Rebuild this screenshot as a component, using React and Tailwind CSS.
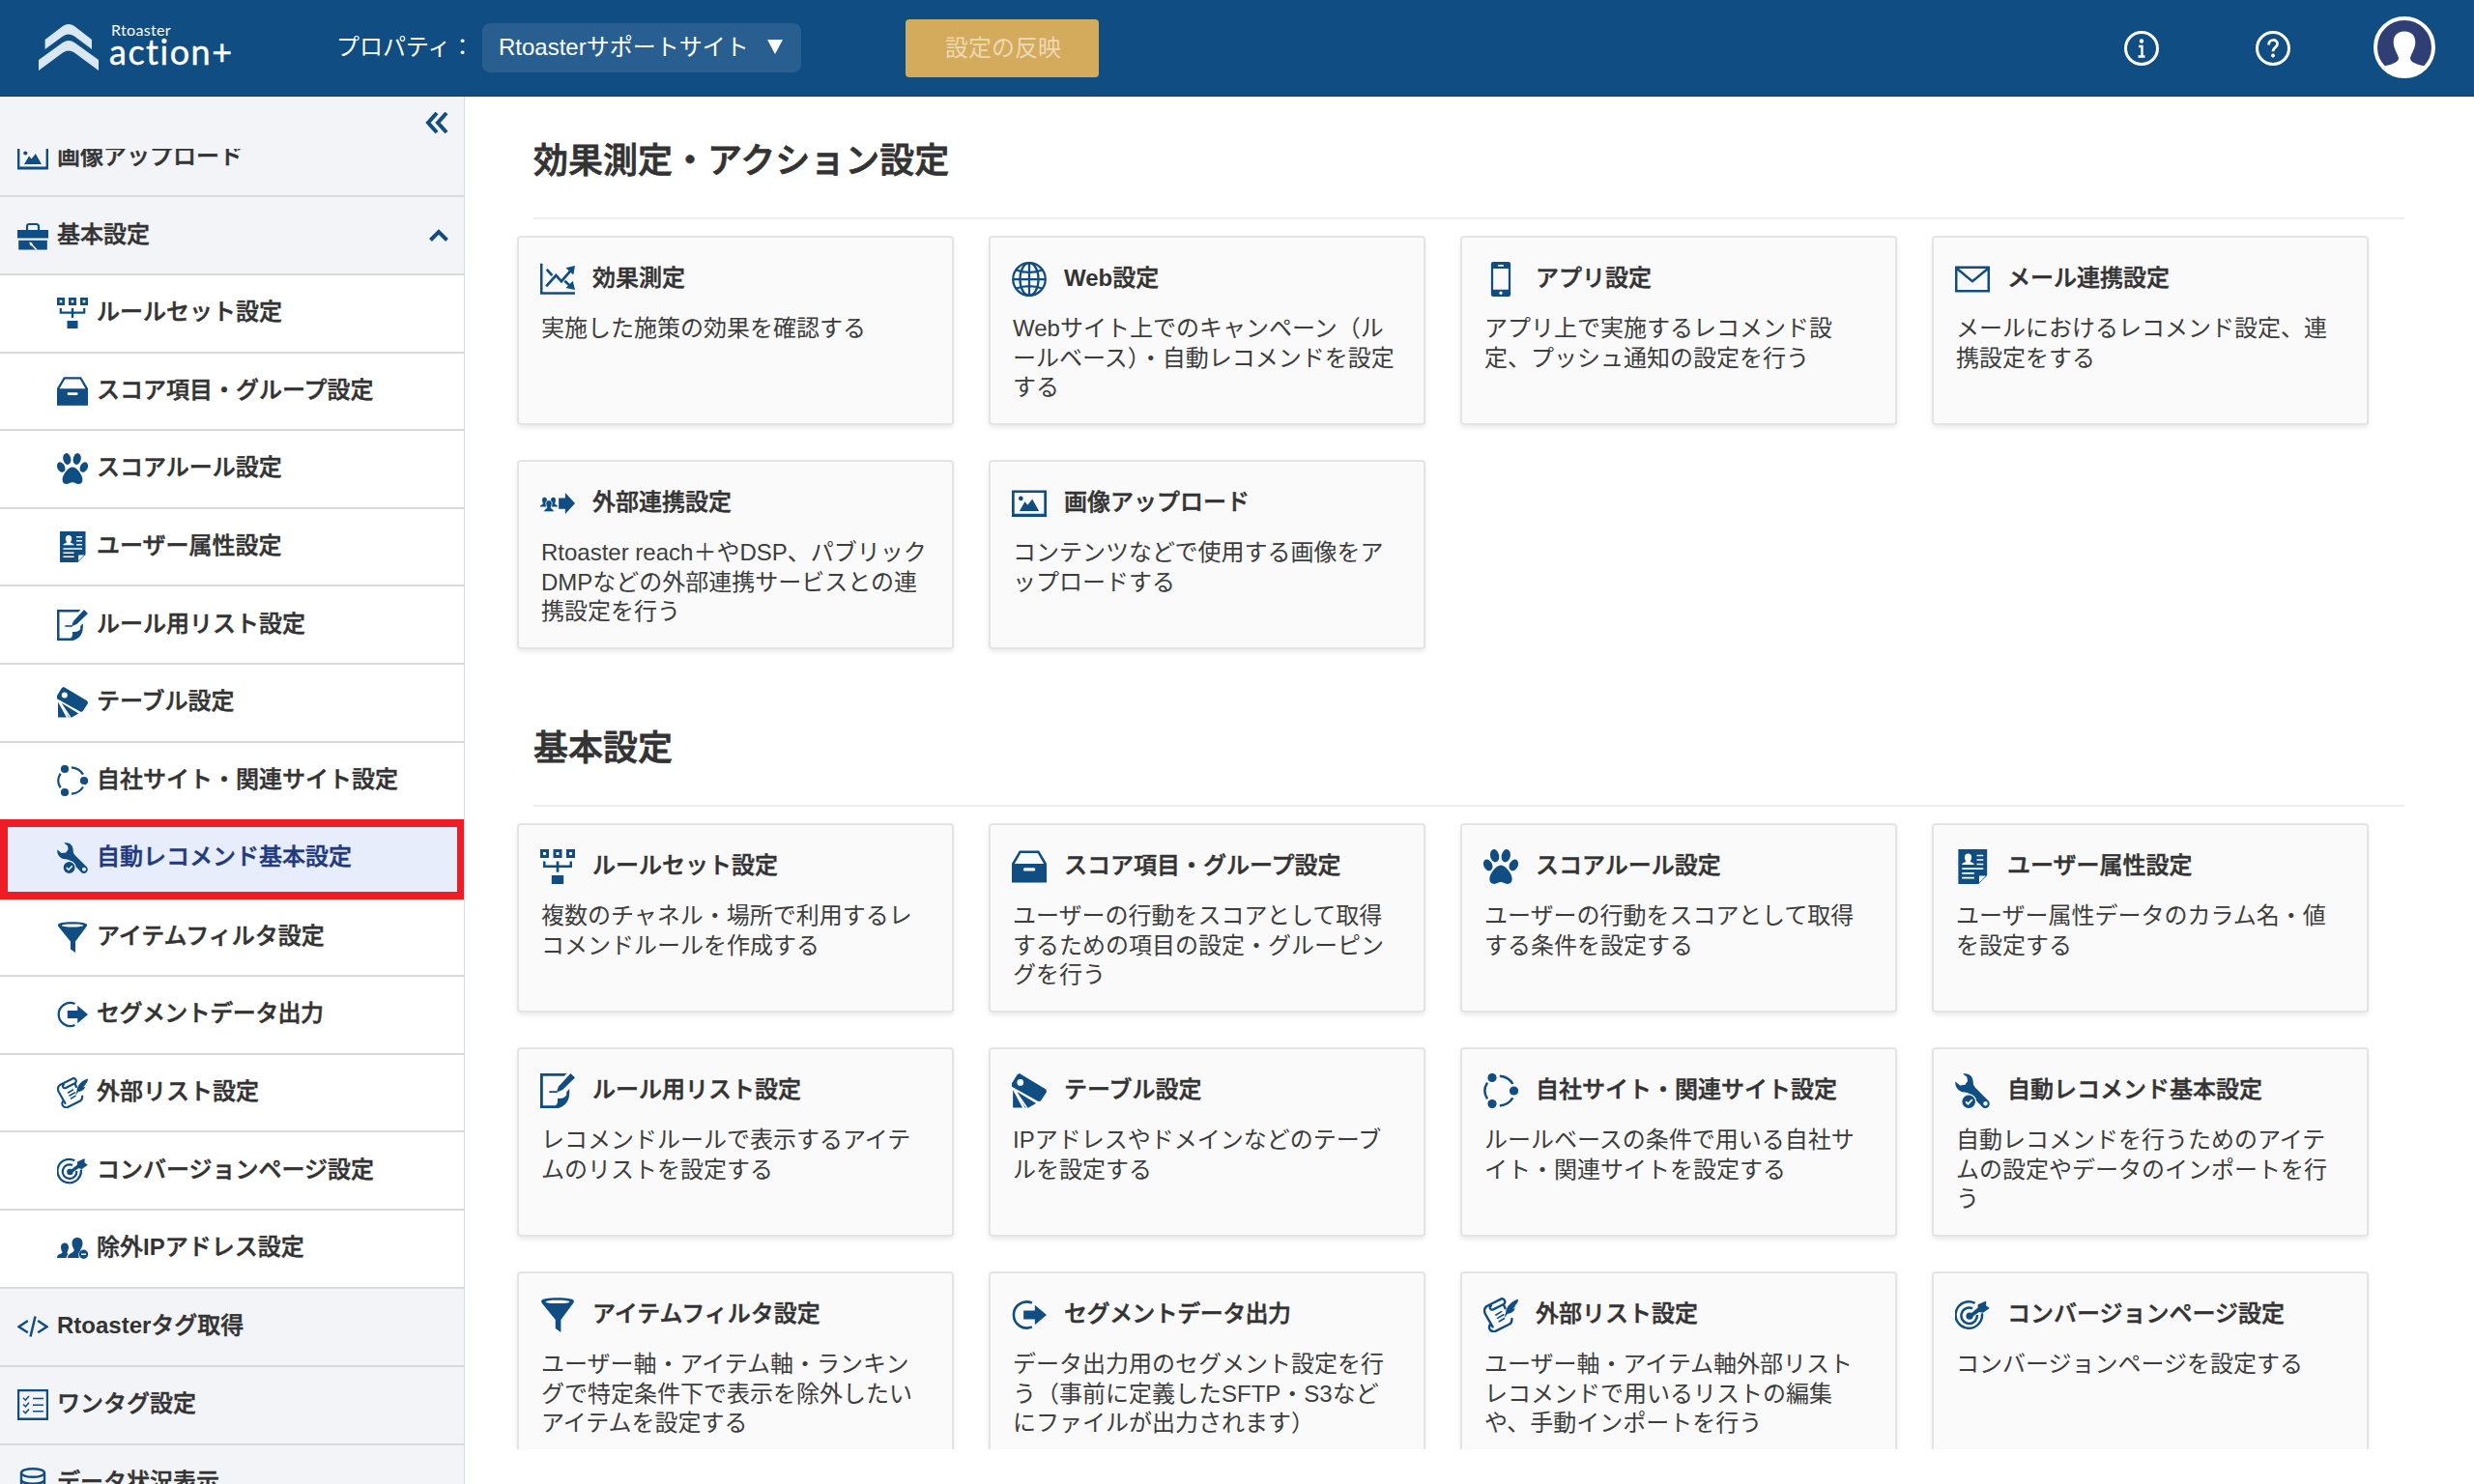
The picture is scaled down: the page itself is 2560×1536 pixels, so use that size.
import React from "react";

const BLUE = "#104d82";

/* ---------- icons, all drawn on a 32 unit grid ---------- */

const Svg = ({ className = "size-8", children }) => (
  <svg viewBox="0 0 32 32" className={"shrink-0 " + className} fill={BLUE} stroke="none">
    {children}
  </svg>
);

const ImageIcon = (p) => (
  <Svg {...p}>
    <path fillRule="evenodd" d="M0 4h32v24.5H0zM2.4 6.2v19.4h27.2V6.2z" />
    <circle cx="8.3" cy="11.5" r="2.1" />
    <path d="M7 23l5-8.5 2.6 3L18.8 12 25 23z" />
  </Svg>
);

const BriefcaseIcon = (p) => (
  <Svg {...p}>
    <path d="M10 10V6.500q0-2.500 2.500-2.500h7q2.500 0 2.500 2.500V10" fill="none" stroke={BLUE} strokeWidth="2.200" />
    <path d="M0 10h32v8.500H0zM1.200 20.800h29.600v9.700H1.200z" />
    <path d="M12.500 22.500q3 0 3.500 3l5 5h-2.500l-3.500-4q-3-.5-2.500-4z" fill="#f3f4f8" />
  </Svg>
);

const RuleSetIcon = (p) => (
  <Svg {...p}>
    <path
      fillRule="evenodd"
      d="M0 0h8v8H0zM2.700 2.700v2.600h2.600V2.700zM12 0h8v8h-8zM14.700 2.700v2.600h2.600V2.700zM24 0h8v8h-8zM26.700 2.700v2.600h2.600V2.700z"
    />
    <path d="M2.700 11h2.200v3.600h9.900V11h2.400v3.600h9.900V11h2.200v5.800H17.200V21h-2.400v-4.200H2.700zM10.500 24h11v8h-11z" />
  </Svg>
);

const DrawerIcon = (p) => (
  <Svg {...p}>
    <path
      fillRule="evenodd"
      d="M7 1.300h18L32 13v17.700H0V13zM8.200 3.500L2.600 13.300h26.800L23.800 3.500zM11.800 17.200q-1.200 0-1.200 1.400t1.200 1.400h8.600q1.200 0 1.200-1.400t-1.200-1.400z"
    />
  </Svg>
);

const PawIcon = (p) => (
  <Svg {...p}>
    <ellipse cx="10.300" cy="6" rx="4" ry="6" transform="rotate(-12 10.300 6)" />
    <ellipse cx="20.700" cy="6" rx="4" ry="6" transform="rotate(12 20.700 6)" />
    <ellipse cx="4.200" cy="14.600" rx="3.900" ry="5.500" transform="rotate(-25 4.200 14.600)" />
    <ellipse cx="27.800" cy="14.600" rx="3.900" ry="5.500" transform="rotate(25 27.800 14.600)" />
    <path d="M16 14.600c4.500 0 10.400 8 10.400 12.800 0 3-1.600 4.600-4.400 4.600-2.400 0-3.600-1.700-6-1.700S12.400 32 10 32c-2.800 0-4.400-1.600-4.400-4.600 0-4.800 5.900-12.800 10.400-12.800z" />
  </Svg>
);

const ProfileIcon = (p) => (
  <Svg {...p}>
    <path fillRule="evenodd" d="M3 0h26.500v24l-8 8H3zM28.200 24.500h-6V30.600z" />
    <g fill="#fff">
      <path d="M12 4c2 0 3.200 1.400 3.200 3.500 0 1.800-.8 2.600-1.200 3.700 0 1.100 3.600 1 3.600 3H6.400c0-2 3.600-1.900 3.600-3C9.600 10.100 8.800 9.300 8.800 7.500 8.800 5.400 10 4 12 4zM20 5h6v1.500h-6zM20 9h6v1.500h-6zM20 13h6v1.500h-6zM6.400 17.200H26v1.500H6.400zM6.400 21.400h11.200v1.500H6.400zM6.400 25.500h11.200V27H6.400z" />
    </g>
  </Svg>
);

const EditListIcon = (p) => (
  <Svg {...p}>
    <path d="M0 0h24.500L22 2.500H2.500v27H14c1.800-1.200 2.200-3 2-6.500 4.500.4 7-.8 8.200-3.200V17l2.600-2.800c.8 10.800-3 15.400-10.300 17.800H0z" />
    <path d="M28 0l4 4-11.500 11-4 1.800-1.200-.6 1.600-4.200z" />
    <path d="M8.300 16.200h7.500v1.600H8.300z" />
  </Svg>
);

const TagsIcon = (p) => (
  <Svg {...p}>
    <path
      fillRule="evenodd"
      d="M7 0L31.400 14.600 32 17l-5.600 8.600-2 .2L0 12.200V9L5 1zM7.800 5.400a3 3 0 100 6 3 3 0 000-6z"
    />
    <path d="M1 15.400L9.800 31.500H1zM4.800 16.800L22.300 27.600 14.800 31.700h-2.600z" />
    <path d="M2.500 15L14 32" stroke="#fff" strokeWidth="1.400" />
  </Svg>
);

const SitesIcon = (p) => (
  <Svg {...p}>
    <circle cx="8" cy="4" r="4.100" />
    <circle cx="28" cy="16" r="4.100" />
    <circle cx="8" cy="28" r="4.100" />
    <g fill="none" stroke={BLUE} strokeWidth="2.200">
      <path d="M15 2.400q8 .6 12 7.200M27 22.500q-4 6.500-12 7.200M3.600 8.600q-4.800 7.400 0 14.800" />
    </g>
  </Svg>
);

const WrenchIcon = (p) => (
  <Svg {...p}>
    <path
      fillRule="evenodd"
      d="M7.200.4C13-1 17 3.200 16.600 8.200q0 2.800 2 5L31 25.500c2.400 3.500-1.200 8-5.300 6L13.500 18.800q-2-1.600-5-1.500C3 17-.4 12 .3 7.500L4.600 11l4.600-.6 2.400-3.400-.6-3.600zM28 25.800a2 2 0 100 4 2 2 0 000-4z"
    />
    <circle cx="12.600" cy="26" r="6.600" stroke="#f3f5fb" strokeWidth="1.200" />
    <path d="M9.800 26l2.200 2.200 3.800-4" fill="none" stroke="#fff" strokeWidth="1.600" />
  </Svg>
);

const FunnelIcon = (p) => (
  <Svg {...p}>
    <path
      fillRule="evenodd"
      d="M16 .3c9 0 15 1.100 15 3 0 1.400-.6 2-1.400 3L19 20.500V32l-5-3.500v-8L2.400 6.300C1.600 5.300 1 4.700 1 3.300c0-1.900 6-3 15-3zm0 2.200C9.500 2.500 5 3 5 3.900s4.500 1.500 11 1.500 11-.6 11-1.500-4.500-1.400-11-1.400z"
    />
  </Svg>
);

const ExportIcon = (p) => (
  <Svg {...p}>
    <path d="M18.500 5A12 12 0 1018.500 27" fill="none" stroke={BLUE} strokeWidth="2.300" />
    <path d="M10.800 12h10.400V6.800L32 16 21.200 25.200V20H10.800z" />
  </Svg>
);

const ScrollIcon = (p) => (
  <Svg {...p}>
    <g fill="none" stroke={BLUE} strokeWidth="2.100" strokeLinejoin="round" strokeLinecap="round">
      <path d="M16.500 1.200L3 8C0 10.500.5 13.500 2.500 16.500L8.500 27M16.500 1.200c3-.6 4.500 3.400 2 5L9 11c-2.500 1-4-2-2-3.500M6 25c-2 4 1 7 5 6l13-6.500c2-1 2.200-2.500 2.200-5M18.500 6.500l1.500 3.500" />
      <path d="M11.500 16l5-3M13 19l5.500-3.200M14.500 22l4.500-2.600" strokeWidth="1.500" />
    </g>
    <path d="M32 1.500C26 3 21 8 20.500 14l-1.500 5 3-4c5-.5 7-4 7-5l-2 .2 3-2.600-1.600.2C31 6 32 4 32 1.500z" />
  </Svg>
);

const TargetIcon = (p) => (
  <Svg {...p}>
    <g fill="none" stroke={BLUE} strokeWidth="2.200">
      <path d="M18.300 5.200A12.200 12.200 0 1024.800 14.500" />
      <path d="M16 10A7.300 7.300 0 1020.300 16" />
    </g>
    <circle cx="13.400" cy="17" r="3.200" />
    <path d="M13 16l8-6.600V6.500L28.600 3v4.500l3.200 2.200-6 4.300-3.500-.7-7.300 5z" />
  </Svg>
);

const UsersMinusIcon = (p) => (
  <Svg {...p}>
    <path d="M8 10.500c2.500 0 4 1.800 4 4.600 0 2.400-1 3.700-1.500 5 0 1.400.8 1.800.8 2.400-1 .8-1.600 1.800-1.600 3.500H0c0-5 5.500-3.500 5.500-6-.5-1.300-1.500-2.600-1.500-5 0-2.800 1.500-4.500 4-4.500z" />
    <path d="M21 5c3.500 0 5.500 2.300 5.500 6 0 3-1.300 4.500-2.200 6.500v1.200c-2.300 1.400-2.600 4.300-1.400 7.300H11c0-5.500 6.700-4.300 6.700-8.500-.8-2-2.200-3.500-2.200-6.500 0-3.700 2-6 5.500-6z" />
    <path fillRule="evenodd" d="M27.500 17.500a4.700 4.700 0 100 9.400 4.700 4.700 0 000-9.400zM25 21.400h5v1.700h-5z" />
  </Svg>
);

const CodeIcon = (p) => (
  <Svg {...p}>
    <path d="M10.800 10L1.500 16.300l9.300 6M21.200 10l9.300 6.300-9.300 6M18.500 5.500L13.500 26.500" fill="none" stroke={BLUE} strokeWidth="2.500" />
  </Svg>
);

const ChecklistIcon = (p) => (
  <Svg {...p}>
    <path fillRule="evenodd" d="M0 0h32v32H0zM2.200 2.200v27.400h27.600V2.200z" />
    <path
      d="M6 8.800l2.400 2.400L12 7M6 15.500l2.400 2.400L12 13.700M6 22.200l2.400 2.400L12 20.400M16 9.600h11M16 16.300h11M16 22.800h11"
      fill="none"
      stroke={BLUE}
      strokeWidth="1.500"
    />
  </Svg>
);

const DatabaseIcon = (p) => (
  <Svg {...p}>
    <g fill="none" stroke={BLUE} strokeWidth="2.400">
      <ellipse cx="16" cy="5.500" rx="12" ry="4.300" />
      <path d="M4 5.500v21c0 5.700 24 5.700 24 0v-21M4 12.500c0 5.700 24 5.700 24 0M4 19.500c0 5.700 24 5.700 24 0" />
    </g>
  </Svg>
);

const ChartIcon = (p) => (
  <Svg {...p}>
    <path d="M0 1.500h2.200v26.300H32V30H0z" />
    <g fill="none" stroke={BLUE} strokeWidth="2.400">
      <path d="M5.500 22.500l9-10 5 5.500L29 7" />
      <path d="M6 7l5 5.500M22.500 17.500l6 5.500" />
    </g>
    <path d="M32 3.600l-1.500 8.500-7-6.500zM32 25.700l-8.500-1.700 6.500-6.500z" />
  </Svg>
);

const GlobeIcon = (p) => (
  <Svg {...p}>
    <g fill="none" stroke={BLUE} strokeWidth="2">
      <circle cx="16" cy="16" r="14.900" />
      <ellipse cx="16" cy="16" rx="8.500" ry="14.900" />
      <path d="M16 1v30M1 16h30M4 7.500q12 4.500 24 0M4 24.500q12-4.500 24 0" />
    </g>
  </Svg>
);

const PhoneIcon = (p) => (
  <Svg {...p}>
    <path
      fillRule="evenodd"
      d="M9 0h14q2 0 2 2v28q0 2-2 2H9q-2 0-2-2V2q0-2 2-2zM9 6.300v19.200h14V6.300zM13.500 2.700v1.500h5V2.700zM16 27.200a1.500 1.500 0 100 3 1.500 1.500 0 000-3z"
    />
  </Svg>
);

const MailIcon = (p) => (
  <Svg {...p}>
    <path d="M1.100 5.100h29.800v21.800H1.100zM1.500 6l14.500 12L30.500 6" fill="none" stroke={BLUE} strokeWidth="2.200" />
  </Svg>
);

const LinkOutIcon = (p) => (
  <Svg {...p}>
    <path d="M17 11h6V6.300l9 9.700-9 9.700V21h-6z" />
    <path d="M4 10.500c1.500 0 2.200 1 2.200 2.500S5.500 15.500 5.500 16.500L6 19H0c0-2 2.500-1.500 2.500-3 0-.8-.7-1.500-.7-3S2.500 10.500 4 10.500zM12 10.500c1.500 0 2.200 1 2.200 2.500s-.7 2.200-.7 3c0 1.500 2.500 1 2.500 3h-6l.5-2.500c0-1-.7-2-.7-3.500s.7-2.500 2.200-2.500z" />
    <path d="M8 13c2 0 2.800 1.500 2.800 3.200S10 19 10 20s2.800 1.300 2.800 3.800H3.200C3.200 21.300 6 21 6 20s-.8-2.100-.8-3.800S6 13 8 13z" stroke="#fafafa" strokeWidth=".7" />
  </Svg>
);

/* ---------- text ---------- */

/* Latin runs are bold; Japanese runs are medium with a light outline. */
const Heading = ({ children }) =>
  children.split(/([A-Za-z]+)/).map((part, i) =>
    i % 2 ? (
      <span key={i} className="font-bold">
        {part}
      </span>
    ) : (
      <span key={i} className={"[-webkit-text-stroke:0.5px_currentColor] " + (part.includes("セグメント") ? "tracking-[-0.550px]" : "")}>
        {part}
      </span>
    )
  );

/* ---------- data ---------- */

const subItems = [
  [RuleSetIcon, "ルールセット設定"],
  [DrawerIcon, "スコア項目・グループ設定"],
  [PawIcon, "スコアルール設定"],
  [ProfileIcon, "ユーザー属性設定"],
  [EditListIcon, "ルール用リスト設定"],
  [TagsIcon, "テーブル設定"],
  [SitesIcon, "自社サイト・関連サイト設定"],
  [WrenchIcon, "自動レコメンド基本設定", true],
  [FunnelIcon, "アイテムフィルタ設定"],
  [ExportIcon, "セグメントデータ出力"],
  [ScrollIcon, "外部リスト設定"],
  [TargetIcon, "コンバージョンページ設定"],
  [UsersMinusIcon, "除外IPアドレス設定"],
];

const tailItems = [
  [CodeIcon, "Rtoasterタグ取得"],
  [ChecklistIcon, "ワンタグ設定"],
  [DatabaseIcon, "データ状況表示"],
];

const sections = [
  {
    title: "効果測定・アクション設定",
    cards: [
      [ChartIcon, "効果測定", ["実施した施策の効果を確認する"]],
      [GlobeIcon, "Web設定", ["Webサイト上でのキャンペーン（ル", "ールベース）・自動レコメンドを設定", "する"]],
      [PhoneIcon, "アプリ設定", ["アプリ上で実施するレコメンド設", "定、プッシュ通知の設定を行う"]],
      [MailIcon, "メール連携設定", ["メールにおけるレコメンド設定、連", "携設定をする"]],
      [LinkOutIcon, "外部連携設定", ["Rtoaster reach＋やDSP、パブリック", "DMPなどの外部連携サービスとの連", "携設定を行う"]],
      [ImageIcon, "画像アップロード", ["コンテンツなどで使用する画像をア", "ップロードする"]],
    ],
  },
  {
    title: "基本設定",
    cards: [
      [RuleSetIcon, "ルールセット設定", ["複数のチャネル・場所で利用するレ", "コメンドルールを作成する"]],
      [DrawerIcon, "スコア項目・グループ設定", ["ユーザーの行動をスコアとして取得", "するための項目の設定・グルーピン", "グを行う"]],
      [PawIcon, "スコアルール設定", ["ユーザーの行動をスコアとして取得", "する条件を設定する"]],
      [ProfileIcon, "ユーザー属性設定", ["ユーザー属性データのカラム名・値", "を設定する"]],
      [EditListIcon, "ルール用リスト設定", ["レコメンドルールで表示するアイテ", "ムのリストを設定する"]],
      [TagsIcon, "テーブル設定", ["IPアドレスやドメインなどのテーブ", "ルを設定する"]],
      [SitesIcon, "自社サイト・関連サイト設定", ["ルールベースの条件で用いる自社サ", "イト・関連サイトを設定する"]],
      [WrenchIcon, "自動レコメンド基本設定", ["自動レコメンドを行うためのアイテ", "ムの設定やデータのインポートを行", "う"]],
      [FunnelIcon, "アイテムフィルタ設定", ["ユーザー軸・アイテム軸・ランキン", "グで特定条件下で表示を除外したい", "アイテムを設定する"]],
      [ExportIcon, "セグメントデータ出力", ["データ出力用のセグメント設定を行", "う（事前に定義したSFTP・S3など", "にファイルが出力されます）"]],
      [ScrollIcon, "外部リスト設定", ["ユーザー軸・アイテム軸外部リスト", "レコメンドで用いるリストの編集", "や、手動インポートを行う"]],
      [TargetIcon, "コンバージョンページ設定", ["コンバージョンページを設定する"]],
    ],
  },
];

/* ---------- page parts ---------- */

function Header() {
  return (
    <header className="flex h-[100px] shrink-0 items-center border-b border-[#0d4272] bg-[#104d82] text-white">
      <div className="ml-10 flex h-full w-[308px] items-start">
        <svg viewBox="0 0 62 48" className="mt-[25px] h-12 w-[62px]" fill="#d9e6f3">
          <path d="M6.600 16L25 2q6-4 12 0l18 14v10L37 12.500q-6-4-12 0L6.600 26z" />
          <path d="M0 37L25 19q6-4 12 0l25 18v11L37 29.500q-6-4-12 0L0 48z" />
        </svg>
        <div className="mt-[23px] ml-[11px] flex flex-col">
          <span className="ml-0.5 font-[Lato] text-[16px] leading-[15px] tracking-[0.300px]">Rtoaster</span>
          <span className="font-[Lato] text-[36px] leading-[31px] tracking-[1.500px] [-webkit-text-stroke:0.4px_#fff]">action+</span>
        </div>
      </div>
      <div className="w-[151px] pb-0.5 text-2xl">プロパティ：</div>
      <button className="flex h-[51px] w-[330px] items-center rounded-lg bg-[#295f90] pb-0.5 pl-[17px] text-2xl">
        Rtoasterサポートサイト
        <svg viewBox="0 0 16 15" className="ml-[19px] h-[15px] w-4" fill="#fff">
          <path d="M0 0h16L8 15z" />
        </svg>
      </button>
      <button className="ml-[108px] h-[60px] w-[200px] rounded bg-[#d4aa5d] pl-0.5 text-2xl text-[#ecd9b2]">設定の反映</button>
      <svg viewBox="0 0 38 38" className="ml-auto size-[38px]" fill="none" stroke="#fff">
        <circle cx="19" cy="19" r="16.500" strokeWidth="3" />
        <circle cx="19" cy="11.500" r="2.200" fill="#fff" stroke="none" />
        <path d="M16 17h3.500v10.500M15.500 27.500h7" strokeWidth="2.400" />
      </svg>
      <svg viewBox="0 0 38 38" className="ml-[98px] size-[38px]" fill="none" stroke="#fff">
        <circle cx="19" cy="19" r="16.500" strokeWidth="3" />
        <path d="M14.600 15.500c-.2-6.500 9-6.500 9-1.200 0 3.500-4.600 4-4.600 8" strokeWidth="2.700" />
        <circle cx="19" cy="26.500" r="2" fill="#fff" stroke="none" />
      </svg>
      <svg viewBox="0 0 64 64" className="mr-10 mb-0.5 ml-[85px] size-16">
        <circle cx="32" cy="32" r="30" fill="#2f3f74" stroke="#fff" strokeWidth="4" />
        <path d="M32 15.500c8 0 11.300 5 11.300 11 0 7-3.800 11-5.300 16.500 0 4 5.500 6.500 15.500 8.500C48 59 41 62 32 62s-16-3-21.500-10.500C20.500 49.500 26 47 26 43c-1.500-5.500-5.300-9.500-5.300-16.500 0-6 3.300-11 11.300-11z" fill="#fff" />
      </svg>
    </header>
  );
}

function Sidebar() {
  return (
    <aside className="flex w-[481px] shrink-0 flex-col overflow-hidden border-r border-[#d3daea] bg-[#f3f4f8] text-2xl font-medium">
      <div className="flex h-[54px] shrink-0 items-start justify-end pt-4 pr-4">
        <svg viewBox="0 0 24 22" className="h-[22px] w-6" fill="none" stroke={BLUE} strokeWidth="4">
          <path d="M12 1L3 11l9 10M22 1l-9 10 9 10" />
        </svg>
      </div>
      <div className="flex h-[50px] shrink-0 flex-col justify-end overflow-hidden">
        <div className="flex h-[81px] shrink-0 items-center border-b-2 border-[#dadada] pl-[18px]">
          <ImageIcon />
          <span className="ml-[9px] pb-0.5">
            <Heading>画像アップロード</Heading>
          </span>
        </div>
      </div>
      <div className="flex h-[81px] shrink-0 items-center border-b-2 border-[#dadada] pr-4 pl-[18px]">
        <BriefcaseIcon />
        <span className="ml-[9px] pb-0.5">
          <Heading>基本設定</Heading>
        </span>
        <svg viewBox="0 0 20 13" className="ml-auto h-[13px] w-5" fill="none" stroke={BLUE} strokeWidth="4">
          <path d="M1.500 11.500L10 3l8.500 8.500" />
        </svg>
      </div>
      {subItems.map(([Icon, label, active]) =>
        active ? (
          <div
            key={label}
            className="-mr-px flex h-[83px] shrink-0 items-center border-8 border-[#ee1c24] bg-[#e7edfb] pb-0.5 pl-[51px] text-[#1f3a7d]"
          >
            <Icon />
            <span className="ml-[9px] pb-0.5">
              <Heading>{label}</Heading>
            </span>
          </div>
        ) : (
          <div
            key={label}
            className={
              label.startsWith("自社")
                ? "flex h-[79px] shrink-0 items-center bg-white pl-[59px]"
                : "flex h-[80.600px] shrink-0 items-center border-b-2 border-[#dadada] bg-white pl-[59px]"
            }
          >
            <Icon />
            <span className="ml-[9px] pb-0.5">
              <Heading>{label}</Heading>
            </span>
          </div>
        )
      )}
      {tailItems.map(([Icon, label]) => (
        <div key={label} className="flex h-[81px] shrink-0 items-center border-b-2 border-[#dadada] pl-[18px]">
          <Icon />
          <span className="ml-[9px] pb-0.5">
            <Heading>{label}</Heading>
          </span>
        </div>
      ))}
    </aside>
  );
}

function Card({ icon: Icon, title, lines }) {
  return (
    <div className="h-[196px] w-[452px] rounded border-2 border-[#e4e4e4] bg-[#fafafa] pt-[25px] pl-[22px] shadow-[0_3px_4px_rgba(0,0,0,0.08)]">
      <div className="flex h-9 items-center">
        <Icon className="size-9" />
        <h3 className="ml-[18px] pb-0.5 text-2xl font-medium">
          <Heading>{title}</Heading>
        </h3>
      </div>
      <div className="mt-[18px] ml-px text-2xl leading-[30.600px] whitespace-nowrap text-[#3d3d3d]">
        {lines.map((line) => (
          <p key={line}>{line}</p>
        ))}
      </div>
    </div>
  );
}

export default function App() {
  return (
    <div
      lang="ja"
      className="flex h-[1536px] w-[2560px] flex-col overflow-hidden bg-white font-['Liberation_Sans','Noto_Sans_CJK_JP',sans-serif] text-[#333]"
    >
      <Header />
      <div className="flex min-h-0 flex-1">
        <Sidebar />
        <main className="h-[1400px] flex-1 overflow-hidden pl-[54px]">
          {sections.map((section) => (
            <section key={section.title} className="mb-[46px] h-[562px]">
              <div className="ml-[17px] flex h-[127px] w-[1936px] items-center border-b-2 border-[#eee]">
                <h2 className="pt-2 text-4xl font-medium [-webkit-text-stroke:0.8px_currentColor]">{section.title}</h2>
              </div>
              <div className="mt-[17px] grid grid-cols-[repeat(4,452px)] gap-x-9 gap-y-9">
                {section.cards.map(([icon, title, lines]) => (
                  <Card key={title} icon={icon} title={title} lines={lines} />
                ))}
              </div>
            </section>
          ))}
        </main>
      </div>
    </div>
  );
}
